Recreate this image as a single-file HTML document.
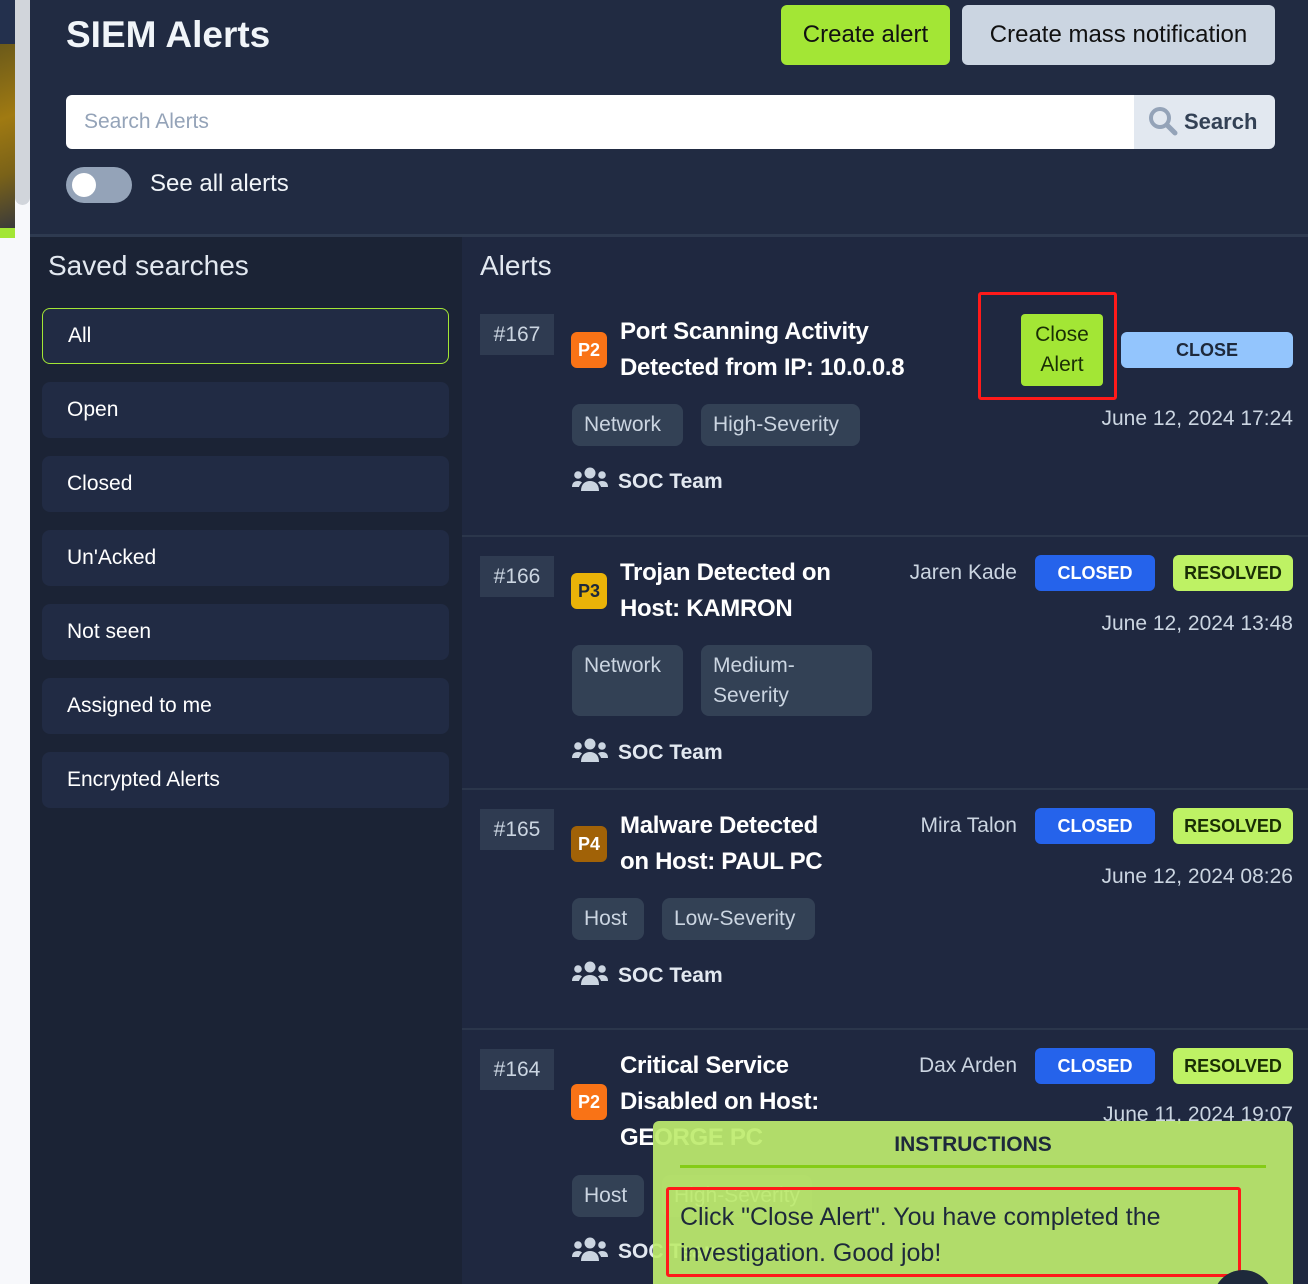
<!DOCTYPE html>
<html style="overflow:hidden;height:1284px"><head><meta charset="utf-8">
<style>
*{box-sizing:border-box;margin:0;padding:0}
body{width:1308px;height:1284px;overflow:hidden;background:#f7f8fb;font-family:"Liberation Sans",sans-serif;position:relative;color:#e2e8f0}
#w{position:absolute;left:0;top:0;width:1308px;height:1284px;overflow:hidden}
.a{position:absolute}
.strip{left:0;top:0;width:15px}
.hdr{left:30px;top:0;width:1278px;height:237px;background:#212b42;border-bottom:3px solid #2e3a50}
.side{left:30px;top:237px;width:432px;height:1047px;background:#1b2335}
.main{left:462px;top:237px;width:846px;height:1047px;background:#1f2840}
.item{position:absolute;left:42px;width:407px;height:56px;background:#212b44;border-radius:8px;font-size:21px;line-height:56px;padding-left:25px;color:#fff}
.id{position:absolute;left:480px;width:74px;height:41px;background:#2f3b51;color:#cbd5e1;font-size:21px;line-height:41px;text-align:center}
.pb{position:absolute;left:571px;width:36px;height:36px;border-radius:6px;font-weight:bold;font-size:18px;line-height:36px;text-align:center;color:#fff}
.ttl{position:absolute;left:620px;font-weight:bold;font-size:24px;line-height:36px;color:#fff;letter-spacing:-0.3px}
.tag{position:absolute;height:42px;background:#334155;border-radius:8px;color:#cbd5e1;font-size:21px;line-height:30px;padding:6px 12px}
.soc{position:absolute;left:572px;font-weight:bold;font-size:21px;color:#e2e8f0;line-height:30px}
.soc svg{vertical-align:-5px;margin-right:10px}
.bd{position:absolute;height:36px;border-radius:6px;font-weight:bold;font-size:18px;line-height:36px;text-align:center}
.cl{left:1035px;width:120px;background:#2563eb;color:#fff}
.rs{left:1173px;width:120px;background:#bef264;color:#1a2e05}
.nm{position:absolute;right:291px;font-size:21px;color:#cbd5e1;line-height:36px}
.dt{position:absolute;right:15px;font-size:21px;color:#cbd5e1;line-height:30px}
.sep{position:absolute;left:462px;width:846px;height:2px;background:#2b364b}
</style></head><body><div id="w">
<div class="a strip" style="height:44px;background:#23304d"></div>
<div class="a strip" style="top:44px;height:184px;background:linear-gradient(160deg,#6b5a1a,#a07a12 40%,#7a6218 70%,#3a3a3a)"></div>
<div class="a strip" style="top:228px;height:10px;background:#a3e635"></div>
<div class="a" style="left:15px;top:0;width:15px;height:205px;background:#d1d5db;border-radius:0 0 8px 8px"></div>
<div class="a hdr"></div>
<div class="a" style="left:66px;top:14px;font-size:37px;font-weight:bold;color:#f1f5f9">SIEM Alerts</div>
<div class="a" style="left:781px;top:5px;width:169px;height:60px;background:#a3e635;border-radius:6px;color:#111;font-size:24px;line-height:60px;text-align:center">Create alert</div>
<div class="a" style="left:962px;top:5px;width:313px;height:60px;background:#cbd5e1;border-radius:6px;color:#111;font-size:24px;line-height:60px;text-align:center">Create mass notification</div>
<div class="a" style="left:66px;top:95px;width:1068px;height:54px;background:#fff;border-radius:6px 0 0 6px;color:#94a3b8;font-size:21px;line-height:54px;padding-left:18px">Search Alerts</div>
<div class="a" style="left:1134px;top:95px;width:141px;height:54px;background:#e2e8f0;border-radius:0 6px 6px 0;color:#334155;font-size:22px;font-weight:bold;line-height:54px;padding-left:14px"><svg width="30" height="30" viewBox="0 0 30 30" style="vertical-align:-7px;margin-right:6px"><circle cx="12" cy="12" r="9" fill="none" stroke="#94a3b8" stroke-width="4"/><path d="M19 19l8 8" stroke="#94a3b8" stroke-width="5" stroke-linecap="round"/></svg>Search</div>
<div class="a" style="left:66px;top:167px;width:66px;height:36px;background:#94a3b8;border-radius:18px"><div style="position:absolute;left:6px;top:6px;width:24px;height:24px;border-radius:50%;background:#fff"></div></div>
<div class="a" style="left:150px;top:170px;font-size:24px;color:#f1f5f9">See all alerts</div>
<div class="a side"></div>
<div class="a main"></div>
<div class="a" style="left:48px;top:250px;font-size:28px;color:#e2e8f0">Saved searches</div>
<div class="item" style="top:308px;border:1px solid #a3e635;line-height:54px">All</div>
<div class="item" style="top:382px">Open</div>
<div class="item" style="top:456px">Closed</div>
<div class="item" style="top:530px">Un'Acked</div>
<div class="item" style="top:604px">Not seen</div>
<div class="item" style="top:678px">Assigned to me</div>
<div class="item" style="top:752px">Encrypted Alerts</div>
<div class="a" style="left:480px;top:250px;font-size:28px;color:#e2e8f0">Alerts</div>

<div class="id" style="top:314px">#167</div>
<div class="pb" style="top:332px;background:#f97316">P2</div>
<div class="ttl" style="top:314px">Port Scanning Activity<br>Detected from IP: 10.0.0.8</div>
<div class="a" style="left:978px;top:292px;width:139px;height:108px;border:3px solid #ff1a1a;border-radius:3px"></div>
<div class="a" style="left:1021px;top:314px;width:82px;height:72px;background:#a3e635;border-radius:4px;color:#1a2e05;font-size:21px;line-height:30px;text-align:center;padding-top:6px">Close<br>Alert</div>
<div class="bd" style="left:1121px;top:332px;width:172px;background:#93c5fd;color:#1e293b">CLOSE</div>
<div class="dt" style="top:404px">June 12, 2024 17:24</div>
<div class="tag" style="left:572px;top:404px;width:111px">Network</div>
<div class="tag" style="left:701px;top:404px;width:159px">High-Severity</div>
<div class="soc" style="top:467px"><svg width="36" height="26" viewBox="0 0 36 26"><g fill="#cbd5e1"><circle cx="18" cy="6" r="5.5"/><circle cx="6" cy="8" r="3.8"/><circle cx="30" cy="8" r="3.8"/><path d="M9 24c0-7 4-10 9-10s9 3 9 10z"/><path d="M0 20c0-4 2-6 6-6 2 0 3 .5 4 1.5-2 2-3 4-3 4.5z"/><path d="M36 20c0-4-2-6-6-6-2 0-3 .5-4 1.5 2 2 3 4 3 4.5z"/></g></svg>SOC Team</div>
<div class="sep" style="top:535px"></div>

<div class="id" style="top:556px">#166</div>
<div class="pb" style="top:573px;background:#eab308;color:#1e293b">P3</div>
<div class="ttl" style="top:555px">Trojan Detected on<br>Host: KAMRON</div>
<div class="nm" style="top:555px">Jaren Kade</div>
<div class="bd cl" style="top:555px">CLOSED</div>
<div class="bd rs" style="top:555px">RESOLVED</div>
<div class="dt" style="top:609px">June 12, 2024 13:48</div>
<div class="tag" style="left:572px;top:645px;height:71px;width:111px">Network</div>
<div class="tag" style="left:701px;top:645px;height:71px;width:171px">Medium-<br>Severity</div>
<div class="soc" style="top:738px"><svg width="36" height="26" viewBox="0 0 36 26"><g fill="#cbd5e1"><circle cx="18" cy="6" r="5.5"/><circle cx="6" cy="8" r="3.8"/><circle cx="30" cy="8" r="3.8"/><path d="M9 24c0-7 4-10 9-10s9 3 9 10z"/><path d="M0 20c0-4 2-6 6-6 2 0 3 .5 4 1.5-2 2-3 4-3 4.5z"/><path d="M36 20c0-4-2-6-6-6-2 0-3 .5-4 1.5 2 2 3 4 3 4.5z"/></g></svg>SOC Team</div>
<div class="sep" style="top:788px"></div>

<div class="id" style="top:809px">#165</div>
<div class="pb" style="top:826px;background:#a16207">P4</div>
<div class="ttl" style="top:808px">Malware Detected<br>on Host: PAUL PC</div>
<div class="nm" style="top:808px">Mira Talon</div>
<div class="bd cl" style="top:808px">CLOSED</div>
<div class="bd rs" style="top:808px">RESOLVED</div>
<div class="dt" style="top:862px">June 12, 2024 08:26</div>
<div class="tag" style="left:572px;top:898px;width:72px">Host</div>
<div class="tag" style="left:662px;top:898px;width:153px">Low-Severity</div>
<div class="soc" style="top:961px"><svg width="36" height="26" viewBox="0 0 36 26"><g fill="#cbd5e1"><circle cx="18" cy="6" r="5.5"/><circle cx="6" cy="8" r="3.8"/><circle cx="30" cy="8" r="3.8"/><path d="M9 24c0-7 4-10 9-10s9 3 9 10z"/><path d="M0 20c0-4 2-6 6-6 2 0 3 .5 4 1.5-2 2-3 4-3 4.5z"/><path d="M36 20c0-4-2-6-6-6-2 0-3 .5-4 1.5 2 2 3 4 3 4.5z"/></g></svg>SOC Team</div>
<div class="sep" style="top:1028px"></div>

<div class="id" style="top:1049px">#164</div>
<div class="pb" style="top:1084px;background:#f97316">P2</div>
<div class="ttl" style="top:1048px">Critical Service<br>Disabled on Host:<br>GEORGE PC</div>
<div class="nm" style="top:1048px">Dax Arden</div>
<div class="bd cl" style="top:1048px">CLOSED</div>
<div class="bd rs" style="top:1048px">RESOLVED</div>
<div class="dt" style="top:1100px">June 11, 2024 19:07</div>
<div class="tag" style="left:572px;top:1175px;width:72px">Host</div>
<div class="tag" style="left:662px;top:1175px">High-Severity</div>
<div class="soc" style="top:1237px"><svg width="36" height="26" viewBox="0 0 36 26"><g fill="#cbd5e1"><circle cx="18" cy="6" r="5.5"/><circle cx="6" cy="8" r="3.8"/><circle cx="30" cy="8" r="3.8"/><path d="M9 24c0-7 4-10 9-10s9 3 9 10z"/><path d="M0 20c0-4 2-6 6-6 2 0 3 .5 4 1.5-2 2-3 4-3 4.5z"/><path d="M36 20c0-4-2-6-6-6-2 0-3 .5-4 1.5 2 2 3 4 3 4.5z"/></g></svg>SOC Team</div>

<div class="a" style="left:653px;top:1121px;width:640px;height:163px;background:rgba(190,236,110,0.92);border-radius:6px 6px 0 0"></div>
<div class="a" style="left:653px;top:1133px;width:640px;text-align:center;font-size:21px;font-weight:bold;color:#1e293b">INSTRUCTIONS</div>
<div class="a" style="left:680px;top:1165px;width:586px;height:3px;background:#84cc16"></div>
<div class="a" style="left:666px;top:1187px;width:575px;height:90px;border:3px solid #ff1a1a;border-radius:3px"></div>
<div class="a" style="left:680px;top:1199px;font-size:25px;line-height:36px;color:#1e293b">Click "Close Alert". You have completed the<br>investigation. Good job!</div>
<div class="a" style="left:1213px;top:1270px;width:60px;height:60px;border-radius:50%;background:#1e293b"></div>
</div></body></html>
